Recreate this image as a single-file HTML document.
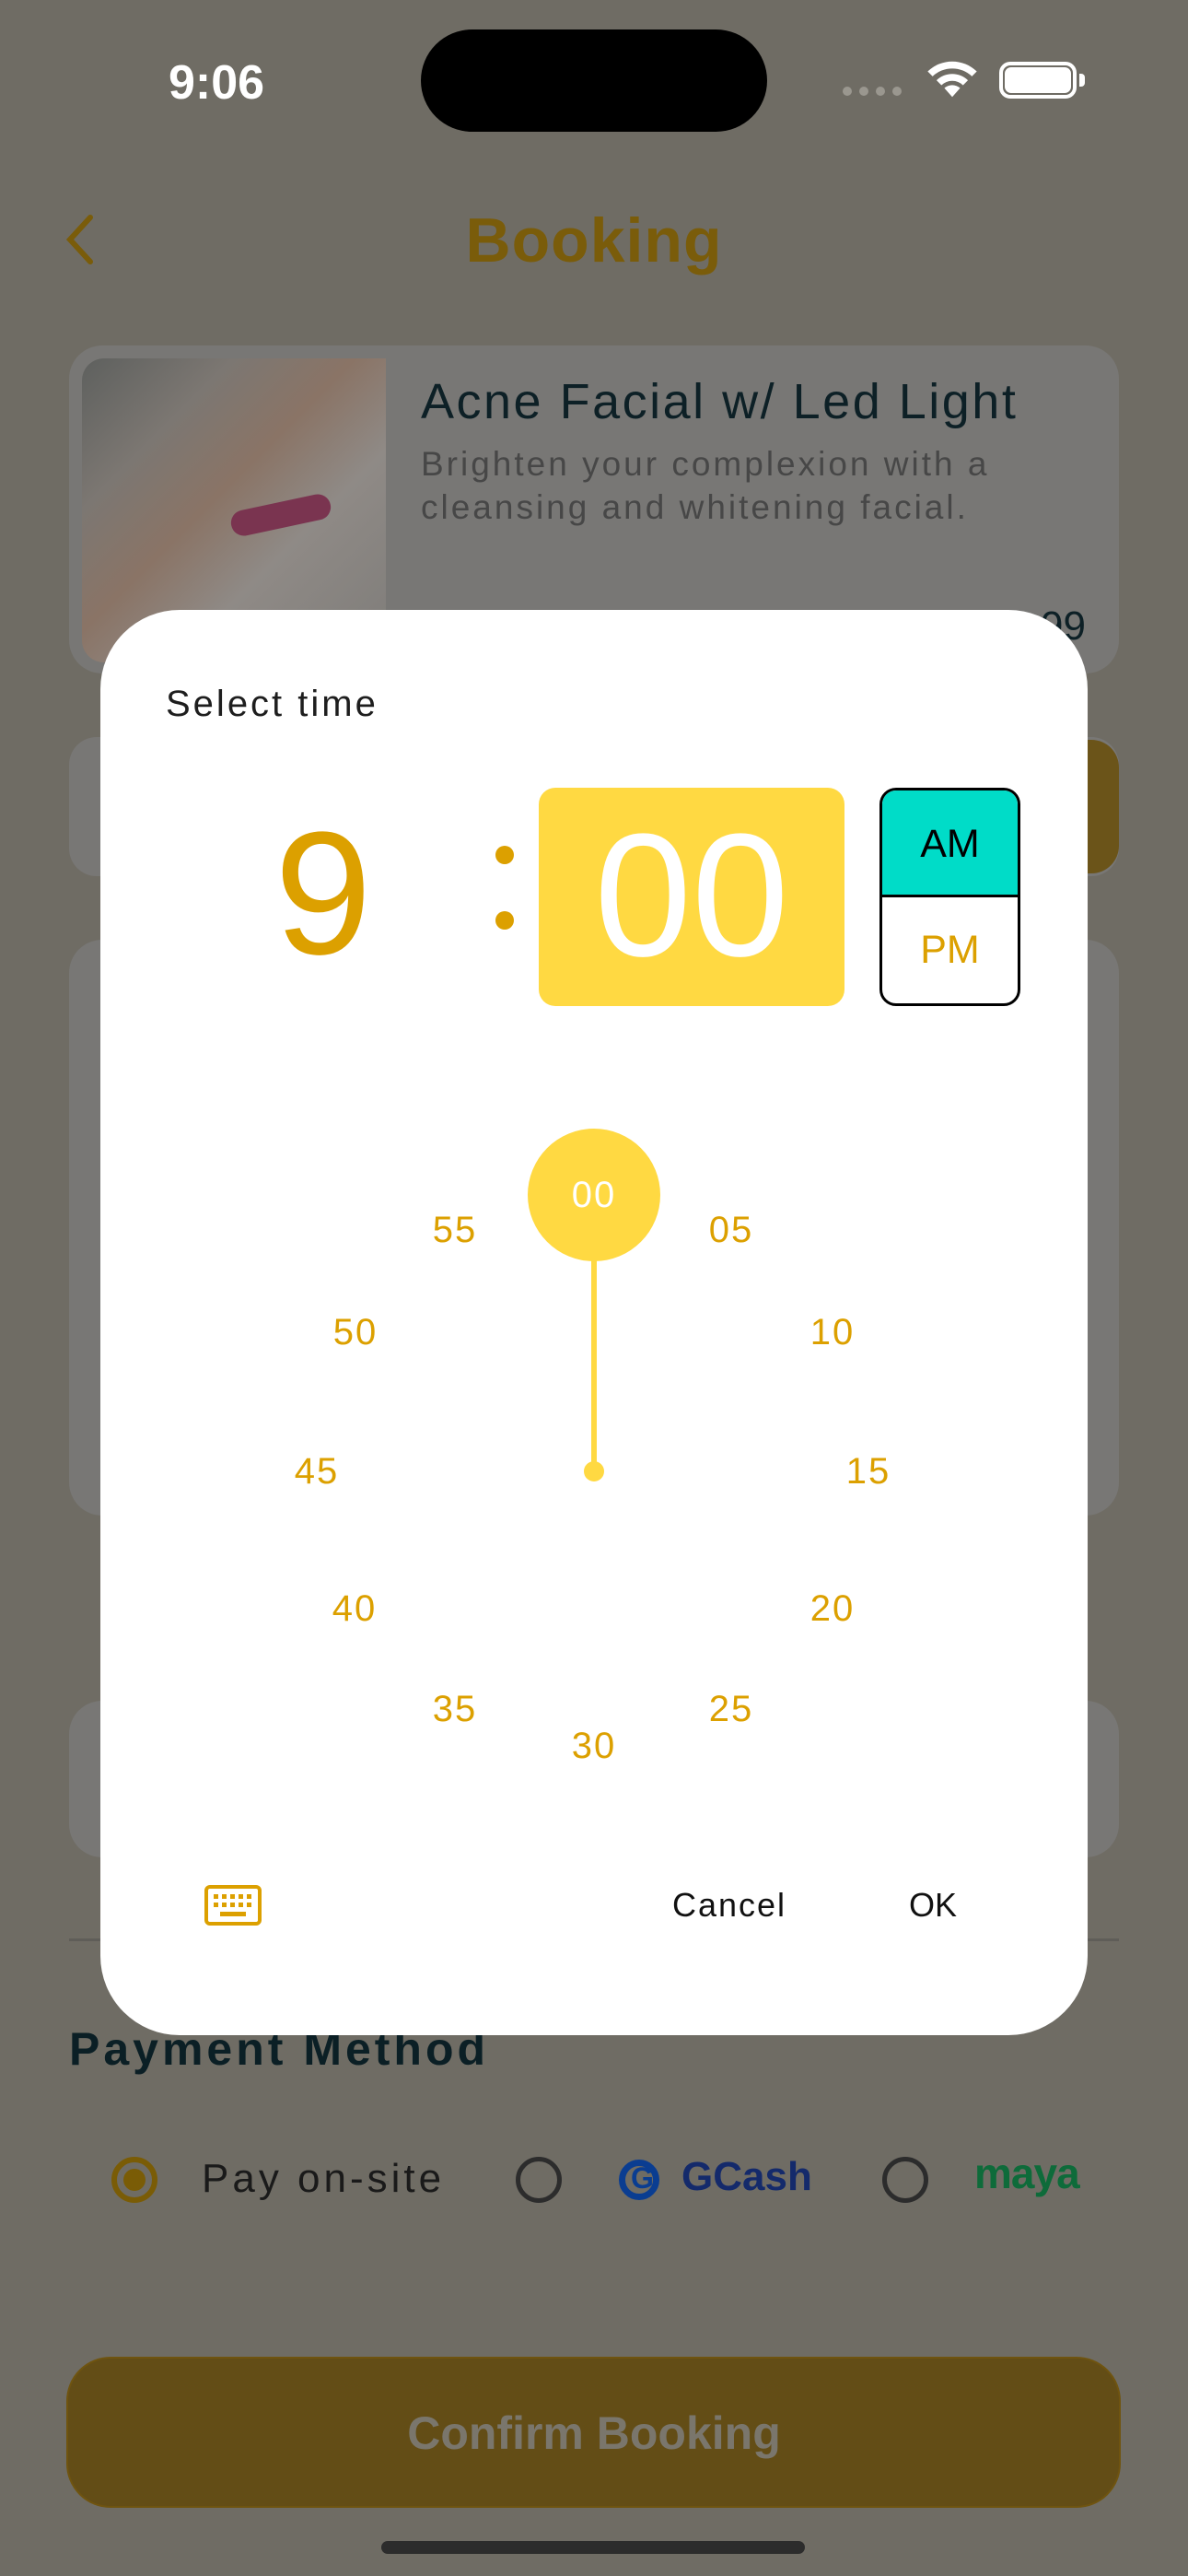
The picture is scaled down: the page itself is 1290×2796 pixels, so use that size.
<!DOCTYPE html>
<html><head><meta charset="utf-8"><style>
*{margin:0;padding:0;box-sizing:border-box}
body{width:1290px;height:2796px;position:relative;overflow:hidden;background:#6f6c64;font-family:"Liberation Sans",sans-serif}
.a{position:absolute}
.t{position:absolute;white-space:nowrap}
.n{position:absolute;width:100px;margin-left:-50px;text-align:center;font-size:40px;color:#dca000;line-height:40px;margin-top:-20px;letter-spacing:2px}
</style></head><body>
<!-- status bar -->
<div class="t" style="left:183px;top:60px;font-size:52px;font-weight:bold;color:#fff">9:06</div>
<div class="a" style="left:457px;top:32px;width:376px;height:111px;border-radius:56px;background:#000"></div>
<div class="a" style="left:915px;top:94px;width:10px;height:10px;border-radius:5px;background:#9a978f;box-shadow:18px 0 #9a978f,36px 0 #9a978f,54px 0 #9a978f"></div>
<svg class="a" style="left:1002px;top:62px" width="64" height="46" viewBox="0 0 60 42"><path d="M30 40 L22 31 A12 12 0 0 1 38 31Z M14 23 A23 23 0 0 1 46 23 L41 28 A16 16 0 0 0 19 28Z M5 14 A36 36 0 0 1 55 14 L50 19 A29 29 0 0 0 10 19Z" fill="#fff"/></svg>
<div class="a" style="left:1085px;top:67px;width:84px;height:40px;border:4px solid #fff;border-radius:12px"></div>
<div class="a" style="left:1091px;top:73px;width:72px;height:28px;background:#fff;border-radius:7px"></div>
<div class="a" style="left:1172px;top:80px;width:6px;height:14px;background:#fff;border-radius:0 4px 4px 0"></div>
<!-- header -->
<svg class="a" style="left:66px;top:230px" width="40" height="60"><path d="M32 6 L10 30 L32 54" stroke="#7a5c0a" stroke-width="6" fill="none" stroke-linecap="round"/></svg>
<div class="t" style="left:0;width:1290px;text-align:center;top:222px;font-size:68px;font-weight:bold;color:#7a5c0a;letter-spacing:1px">Booking</div>
<!-- card 1 -->
<div class="a" style="left:75px;top:375px;width:1140px;height:356px;border-radius:36px;background:#787775"></div>
<div class="a" style="left:89px;top:389px;width:330px;height:330px;border-radius:24px 0 0 24px;background:linear-gradient(135deg,#5e605e 0%,#7c7772 25%,#8a7466 45%,#8f8a86 65%,#7e7c79 100%)"></div>
<div class="a" style="left:250px;top:545px;width:110px;height:28px;border-radius:14px;background:#7a3450;transform:rotate(-12deg)"></div>
<div class="t" style="left:457px;top:405px;font-size:54px;color:#0d2026;letter-spacing:2.5px">Acne Facial w/ Led Light</div>
<div class="t" style="left:457px;top:480px;font-size:37px;color:#474747;line-height:47px;letter-spacing:3px">Brighten your complexion with a<br>cleansing and whitening facial.</div>
<div class="t" style="left:1130px;top:655px;font-size:44px;color:#0d2026">99</div>
<!-- other cards -->
<div class="a" style="left:75px;top:800px;width:1140px;height:151px;border-radius:30px;background:#787775"></div>
<div class="a" style="left:1100px;top:803px;width:115px;height:145px;border-radius:30px;background:#6b5419"></div>
<div class="a" style="left:75px;top:1020px;width:1140px;height:625px;border-radius:36px;background:#787775"></div>
<div class="a" style="left:75px;top:1846px;width:1140px;height:170px;border-radius:36px;background:#787775"></div>
<div class="a" style="left:75px;top:2104px;width:1140px;height:3px;background:#5f5d58"></div>
<div class="t" style="left:75px;top:2195px;font-size:50px;font-weight:bold;color:#0b1f25;letter-spacing:4px">Payment Method</div>
<!-- radios -->
<div class="a" style="left:121px;top:2341px;width:50px;height:50px;border-radius:50%;border:6px solid #7a5c06"></div>
<div class="a" style="left:134px;top:2354px;width:24px;height:24px;border-radius:50%;background:#7a5c06"></div>
<div class="t" style="left:219px;top:2340px;font-size:44px;color:#1a1a1a;letter-spacing:4px">Pay on-site</div>
<div class="a" style="left:560px;top:2341px;width:50px;height:50px;border-radius:50%;border:5px solid #2c2c2c"></div>
<div class="a" style="left:672px;top:2344px;width:44px;height:44px;border-radius:50%;border:7px solid #0a3d91"></div>
<div class="t" style="left:685px;top:2346px;font-size:32px;font-weight:bold;color:#0a3d91">G</div>
<div class="t" style="left:740px;top:2338px;font-size:44px;font-weight:bold;color:#142a6b">GCash</div>
<div class="a" style="left:958px;top:2341px;width:50px;height:50px;border-radius:50%;border:5px solid #2c2c2c"></div>
<div class="t" style="left:1058px;top:2332px;font-size:46px;font-weight:bold;color:#0e6b3a;letter-spacing:-1px">maya</div>
<!-- confirm -->
<div class="a" style="left:72px;top:2558px;width:1145px;height:164px;border-radius:48px;background:#634d16;border:2px solid #6f5410"></div>
<div class="t" style="left:0;width:1290px;text-align:center;top:2612px;font-size:50px;font-weight:bold;color:#7a766c">Confirm Booking</div>
<div class="a" style="left:414px;top:2758px;width:460px;height:14px;border-radius:7px;background:#2c2c2c"></div>
<!-- dialog -->
<div class="a" style="left:109px;top:662px;width:1072px;height:1547px;border-radius:86px;background:#fff"></div>
<div class="t" style="left:180px;top:742px;font-size:40px;color:#1e1e1e;letter-spacing:3px">Select time</div>
<div class="t" style="left:298px;top:870px;font-size:190px;color:#dca000;line-height:200px">9</div>
<div class="a" style="left:538px;top:918px;width:20px;height:20px;border-radius:50%;background:#dca000"></div>
<div class="a" style="left:538px;top:989px;width:20px;height:20px;border-radius:50%;background:#dca000"></div>
<div class="a" style="left:585px;top:855px;width:332px;height:237px;border-radius:18px;background:#ffd942"></div>
<div class="t" style="left:585px;width:332px;text-align:center;top:872px;font-size:190px;color:#fff;line-height:200px">00</div>
<div class="a" style="left:955px;top:855px;width:153px;height:237px;border-radius:18px;border:3px solid #000;overflow:hidden">
<div style="height:116px;background:#00dcc8;border-bottom:3px solid #000;text-align:center;font-size:43px;line-height:116px;color:#000">AM</div>
<div style="text-align:center;font-size:43px;line-height:115px;color:#dca000">PM</div></div>
<!-- clock -->
<div class="a" style="left:573px;top:1225px;width:144px;height:144px;border-radius:50%;background:#ffd942"></div>
<div class="a" style="left:642px;top:1360px;width:6px;height:237px;background:#ffd942"></div>
<div class="a" style="left:634px;top:1586px;width:22px;height:22px;border-radius:50%;background:#ffd942"></div>
<div class="n" style="left:645px;top:1297px;color:#fff">00</div>
<div class="n" style="left:794px;top:1335px">05</div>
<div class="n" style="left:904px;top:1446px">10</div>
<div class="n" style="left:943px;top:1597px">15</div>
<div class="n" style="left:904px;top:1746px">20</div>
<div class="n" style="left:794px;top:1855px">25</div>
<div class="n" style="left:645px;top:1895px">30</div>
<div class="n" style="left:494px;top:1855px">35</div>
<div class="n" style="left:385px;top:1746px">40</div>
<div class="n" style="left:344px;top:1597px">45</div>
<div class="n" style="left:386px;top:1446px">50</div>
<div class="n" style="left:494px;top:1335px">55</div>
<!-- keyboard icon -->
<svg class="a" style="left:222px;top:2046px" width="62" height="44" viewBox="0 0 62 44"><rect x="2" y="2" width="58" height="40" rx="4" fill="none" stroke="#dca000" stroke-width="4"/>
<g fill="#dca000"><rect x="10" y="10" width="5" height="5"/><rect x="19" y="10" width="5" height="5"/><rect x="28" y="10" width="5" height="5"/><rect x="37" y="10" width="5" height="5"/><rect x="46" y="10" width="5" height="5"/><rect x="10" y="19" width="5" height="5"/><rect x="19" y="19" width="5" height="5"/><rect x="28" y="19" width="5" height="5"/><rect x="37" y="19" width="5" height="5"/><rect x="46" y="19" width="5" height="5"/><rect x="17" y="29" width="28" height="5"/></g></svg>
<div class="t" style="left:692px;width:200px;text-align:center;top:2047px;font-size:36px;color:#111;letter-spacing:2px">Cancel</div>
<div class="t" style="left:963px;width:100px;text-align:center;top:2047px;font-size:36px;color:#111">OK</div>
</body></html>
